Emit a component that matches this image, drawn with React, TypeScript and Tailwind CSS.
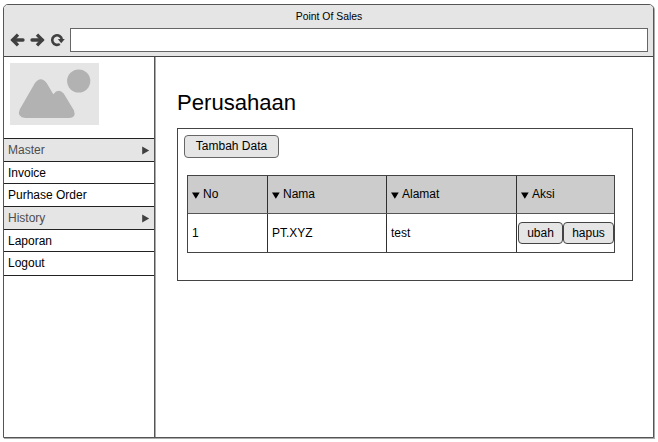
import React from "react";

const menu = [
  { label: "Master", header: true, size: "h-[23px]" },
  { label: "Invoice", header: false, size: "h-[22px]" },
  { label: "Purhase Order", header: false, size: "h-[23px]" },
  { label: "History", header: true, size: "h-[23px]" },
  { label: "Laporan", header: false, size: "h-[22px]" },
  { label: "Logout", header: false, size: "h-[24px] pb-[2px]" },
];

function Arrow({ flip = false }: { flip?: boolean }) {
  return (
    <svg width="15" height="14" viewBox="0 0 15 14" fill="none" stroke="#404040" strokeWidth="3.3" className={flip ? "-scale-x-100" : ""}>
      <path d="M3 7H13" strokeLinecap="round" />
      <path d="M8 1.7L2.7 7L8 12.3" strokeLinejoin="miter" />
    </svg>
  );
}

function Reload() {
  return (
    <svg width="15" height="14" viewBox="0 0 15 14">
      <path d="M9.8 11A4.8 4.8 0 1 1 11.8 6.5" fill="none" stroke="#404040" strokeWidth="2.6" />
      <path d="M7.8 6H14.8L11.2 10.2Z" fill="#404040" />
    </svg>
  );
}

function Placeholder() {
  return (
    <svg width="89" height="62" viewBox="0 0 89 62" className="block">
      <rect width="89" height="62" fill="#e5e5e5" />
      <circle cx="68.7" cy="18" r="11.6" fill="#b2b2b2" />
      <path d="M9.7 46.5L24.8 20.2Q30.8 12.4 36.8 20.2L43.3 31.2Q48.6 24.8 53.7 30.4L64 47.5Q66.5 55 59 55H15.5Q6.5 54.2 9.7 46.5Z" fill="#b2b2b2" />
    </svg>
  );
}

function Heading({ children, last = false }: { children: React.ReactNode; last?: boolean }) {
  return (
    <div className={`flex h-full items-center pb-[2px] pl-[3.5px] ${last ? "" : "border-r border-[#303030]"}`}>
      <svg width="8" height="7" viewBox="0 0 8 7" className="mt-[3px] mr-[3.5px]">
        <path d="M0 0.5H7.7L3.85 6.7Z" fill="#000" />
      </svg>
      <span>{children}</span>
    </div>
  );
}

export default function App() {
  return (
    <div className="h-[442px] w-[658px] overflow-hidden bg-white pt-[4px] pl-[3px] font-['Liberation_Sans',Arial,sans-serif] text-[12px] leading-[14px] text-black">
      <div className="flex h-[434px] w-[651px] flex-col rounded-t-[5px] border border-[#555] bg-white shadow-[1px_1px_0_#aaa]">
        <header className="h-[52px] shrink-0 rounded-t-[4px] border-b border-[#444] bg-[#e5e5e5]">
          <div className="h-[23px] pt-[5px] pl-px text-center text-[10.4px]">Point Of Sales</div>
          <div className="flex h-[24px] items-center pl-[6px]">
            <div className="flex w-[60px] gap-[5px]">
              <Arrow />
              <Arrow flip />
              <Reload />
            </div>
            <div className="h-[24px] w-[578px] border border-[#666] bg-white" />
          </div>
        </header>
        <div className="flex flex-1">
          <aside className="w-[151px] border-r border-[#555] pt-[6px] shadow-[1px_0_0_#aaa]">
            <div className="h-[75px] pl-[6px]">
              <Placeholder />
            </div>
            <nav className="border-t border-[#222]">
              {menu.map((m) => (
                <div
                  key={m.label}
                  className={`flex items-center justify-between border-b border-[#222] pr-[4px] pl-[4px] ${m.size} ${m.header ? "bg-[#e5e5e5] text-[#4d4d4d]" : ""}`}
                >
                  <span>{m.label}</span>
                  {m.header && (
                    <svg width="8" height="9" viewBox="0 0 8 9" className="mt-[1px]">
                      <path d="M0.2 0.5V8.5L7.2 4.5Z" fill="#404040" />
                    </svg>
                  )}
                </div>
              ))}
            </nav>
          </aside>
          <main className="pt-[33px] pl-[22px]">
            <h1 className="h-[38px] text-[22.1px] leading-[26px]">Perusahaan</h1>
            <section className="h-[153px] w-[456px] border border-[#444] pt-[6px] pl-[6px]">
              <button className="block h-[23px] w-[95px] rounded-[4px] border border-[#666] bg-[#e5e5e5] pb-px">Tambah Data</button>
              <div className="mt-[17px] ml-[3px] w-[428px] border border-[#444]">
                <div className="grid h-[38px] grid-cols-[80px_119px_130px_97px] border-b border-[#555] bg-[#ccc]">
                  <Heading>No</Heading>
                  <Heading>Nama</Heading>
                  <Heading>Alamat</Heading>
                  <Heading last>Aksi</Heading>
                </div>
                <div className="grid h-[38px] grid-cols-[80px_119px_130px_97px]">
                  <div className="flex items-center border-r border-[#303030] pl-1">1</div>
                  <div className="flex items-center border-r border-[#303030] pl-1">PT.XYZ</div>
                  <div className="flex items-center border-r border-[#303030] pl-1">test</div>
                  <div className="flex items-center pl-px">
                    <button className="h-[22px] w-[45px] rounded-[4px] border border-[#444] bg-[#e5e5e5]">ubah</button>
                    <button className="h-[22px] w-[51px] rounded-[4px] border border-[#444] bg-[#e5e5e5]">hapus</button>
                  </div>
                </div>
              </div>
            </section>
          </main>
        </div>
      </div>
    </div>
  );
}
